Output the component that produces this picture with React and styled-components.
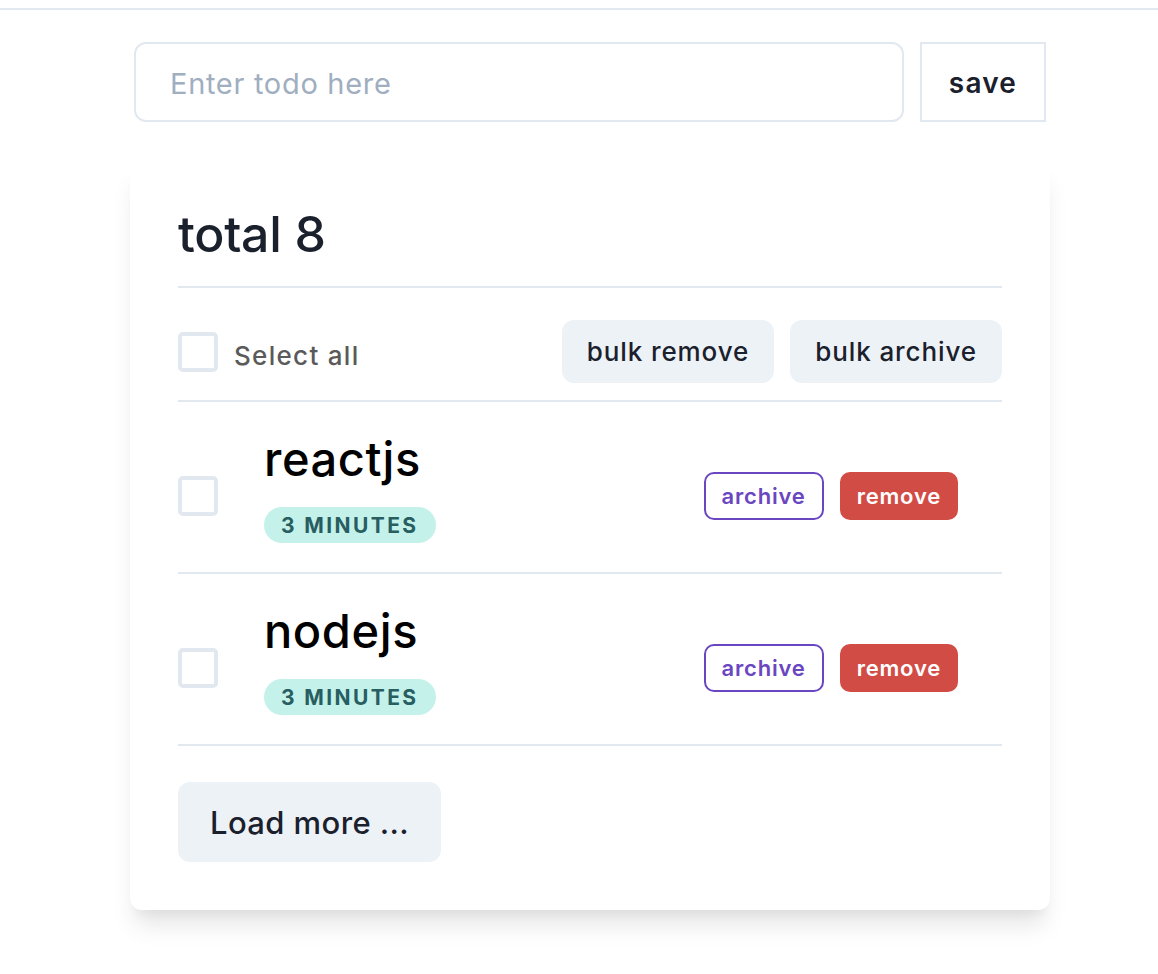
import React from "react";
import styled, { createGlobalStyle } from "styled-components";

const GlobalStyle = createGlobalStyle`
  * { box-sizing: border-box; }
  body {
    margin: 0;
    background: #ffffff;
    font-family: Inter, "Noto Sans", "Liberation Sans", sans-serif;
    color: #1a202c;
  }
`;

const TopRule = styled.div`
  margin-top: 8px;
  border-top: 2px solid #e2e8f0;
`;

const Page = styled.main`
  width: 920px;
  margin: 0 108px 64px 130px;
  padding-top: 32px;
`;

const InputRow = styled.form`
  display: flex;
  gap: 16px;
  margin: 0 4px;
`;

const TodoInput = styled.input`
  flex: 1;
  height: 80px;
  border: 2px solid #e2e8f0;
  border-radius: 12px;
  padding: 2px 34px 0;
  font-family: inherit;
  font-size: 29px;
  letter-spacing: 0.7px;
  color: #1a202c;
  outline: none;
  &::placeholder { color: #a0aec0; }
`;

const SaveButton = styled.button`
  width: 126px;
  height: 80px;
  border: 2px solid #e2e8f0;
  background: #fff;
  font-family: inherit;
  font-size: 28px;
  font-weight: 600;
  letter-spacing: 1.2px;
  padding-top: 2px;
  color: #1a202c;
`;

const Card = styled.section`
  margin-top: 38px;
  background: #fff;
  border-radius: 12px;
  padding: 44px 48px 48px;
  box-shadow: 0 20px 25px -5px rgba(0, 0, 0, 0.1), 0 10px 10px -5px rgba(0, 0, 0, 0.04);
`;

const Heading = styled.h2`
  margin: 0;
  font-size: 50px;
  line-height: 1.2;
  font-weight: 500;
  color: #1a202c;
  letter-spacing: -0.3px;
`;

const Divider = styled.hr`
  margin: ${(p) => p.$mt || 0}px 0 0;
  border: none;
  border-top: 2px solid #e2e8f0;
`;

const Toolbar = styled.div`
  display: flex;
  align-items: center;
  justify-content: space-between;
  padding: 32px 0 17px;
`;

const SelectLabel = styled.label`
  display: flex;
  align-items: center;
  gap: 16px;
  font-size: 26px;
  font-weight: 500;
  color: #5a5a5a;
  letter-spacing: 1.3px;
`;

const Box = styled.span`
  display: inline-block;
  width: 40px;
  height: 40px;
  border: 4px solid #e2e8f0;
  border-radius: 5px;
  background: #fff;
  flex-shrink: 0;
  margin-top: ${(p) => p.$offset || 0}px;
`;

const LabelText = styled.span`
  margin-top: 8px;
`;

const BulkGroup = styled.div`
  display: flex;
  gap: 16px;
`;

const GrayButton = styled.button`
  border: none;
  background: #edf2f7;
  border-radius: 12px;
  height: ${(p) => p.$h}px;
  padding: 0 ${(p) => p.$px}px;
  font-family: inherit;
  font-size: ${(p) => p.$fs}px;
  font-weight: 500;
  letter-spacing: ${(p) => p.$ls || 0}px;
  color: #1a202c;
`;

const Item = styled.li`
  display: flex;
  align-items: center;
  min-height: 172px;
  padding-right: 44px;
  border-bottom: 2px solid #e2e8f0;
`;

const List = styled.ul`
  list-style: none;
  margin: 0;
  padding: 0;
`;

const ItemBody = styled.div`
  flex: 1;
  display: flex;
  flex-direction: column;
  align-items: flex-start;
  gap: 20px;
  margin-left: 46px;
`;

const Title = styled.div`
  font-size: 47px;
  line-height: 1.2;
  font-weight: 500;
  letter-spacing: 0.6px;
  color: #000;
`;

const Badge = styled.span`
  display: inline-flex;
  align-items: center;
  height: 36px;
  padding: 0 17px;
  border-radius: 999px;
  background: #c4f1e9;
  color: #285e61;
  font-size: 21px;
  font-weight: 700;
  letter-spacing: 2.4px;
  text-transform: uppercase;
`;

const Actions = styled.div`
  display: flex;
  gap: 16px;
  margin-top: 18px;
`;

const ActionButton = styled.button`
  height: 48px;
  padding: 0 ${(p) => (p.$solid ? 15 : 16)}px;
  border-radius: 10px;
  font-family: inherit;
  font-size: 22px;
  font-weight: 600;
  letter-spacing: 0.8px;
  border: 2px solid ${(p) => (p.$solid ? "#d24c46" : "#6b46c1")};
  background: ${(p) => (p.$solid ? "#d24c46" : "#fff")};
  color: ${(p) => (p.$solid ? "#fff" : "#6b46c1")};
`;

const Footer = styled.div`
  padding-top: 36px;
`;

const todos = [
  { id: 1, title: "reactjs", age: "3 minutes" },
  { id: 2, title: "nodejs", age: "3 minutes" },
];

export default function App() {
  return (
    <>
      <GlobalStyle />
      <TopRule />
      <Page>
        <InputRow onSubmit={(e) => e.preventDefault()}>
          <TodoInput placeholder="Enter todo here" />
          <SaveButton type="submit">save</SaveButton>
        </InputRow>
        <Card>
          <Heading>total 8</Heading>
          <Divider $mt={22} />
          <Toolbar>
            <SelectLabel>
              <Box />
              <LabelText>Select all</LabelText>
            </SelectLabel>
            <BulkGroup>
              <GrayButton $h={63} $px={25} $fs={26} $ls={0.9}>bulk remove</GrayButton>
              <GrayButton $h={63} $px={25} $fs={26} $ls={0.9}>bulk archive</GrayButton>
            </BulkGroup>
          </Toolbar>
          <Divider />
          <List>
            {todos.map((t) => (
              <Item key={t.id}>
                <Box $offset={18} />
                <ItemBody>
                  <Title>{t.title}</Title>
                  <Badge>{t.age}</Badge>
                </ItemBody>
                <Actions>
                  <ActionButton>archive</ActionButton>
                  <ActionButton $solid>remove</ActionButton>
                </Actions>
              </Item>
            ))}
          </List>
          <Footer>
            <GrayButton $h={80} $px={32} $fs={31} $ls={0.4}>Load more ...</GrayButton>
          </Footer>
        </Card>
      </Page>
    </>
  );
}
